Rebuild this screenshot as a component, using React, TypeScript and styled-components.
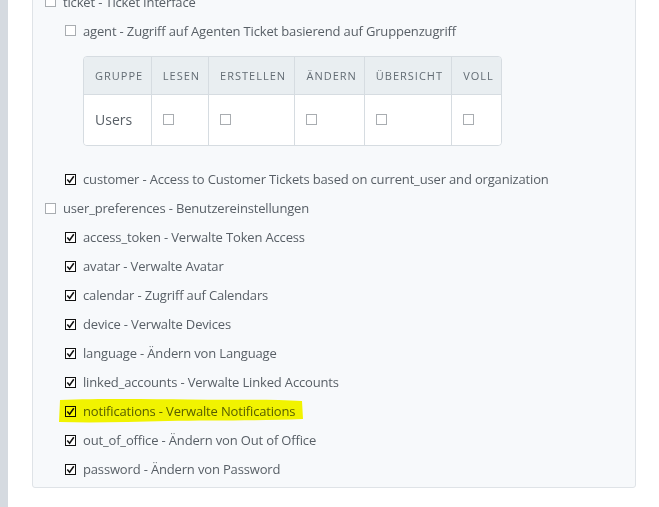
import styled, { createGlobalStyle } from 'styled-components';

const GlobalStyle = createGlobalStyle`
    body {
        margin: 0;
        background: #ffffff;
        font-family: 'Open Sans', 'Noto Sans', sans-serif;
        overflow: hidden;
    }
`;

const Page = styled.div`
    display: flex;
    height: 507px;
    overflow: hidden;
`;

const SideStrip = styled.div`
    width: 8px;
    flex-shrink: 0;
    background: #d5dae0;
`;

const Content = styled.div`
    padding-left: 24px;
`;

const Panel = styled.div`
    width: 604px;
    margin-top: -30px;
    padding: 16px 0 3px 12px;
    background: #f7f9fb;
    border: 1px solid #dfe3e7;
    border-radius: 3px;
    box-sizing: border-box;
`;

const Row = styled.div<{ $level: number }>`
    position: relative;
    display: flex;
    align-items: center;
    height: 29px;
    padding-left: ${(p) => p.$level * 20}px;
    font-size: 13px;
    letter-spacing: -0.16px;
    color: #585f66;
    white-space: nowrap;
`;

const Box = styled.span<{ $checked?: boolean }>`
    width: 11px;
    height: 11px;
    flex-shrink: 0;
    margin-right: 7px;
    box-sizing: border-box;
    border: 1px solid ${(p) => (p.$checked ? '#111' : '#a9adb1')};
    background: #ffffff;
    display: flex;
    align-items: center;
    justify-content: center;
`;

const Marker = styled.svg`
    position: absolute;
    left: 13px;
    top: 1px;
    width: 246px;
    height: 26px;
    mix-blend-mode: multiply;
    pointer-events: none;
`;

const TableWrap = styled.div`
    margin: 11px 0 19px 38px;
    width: 417px;
    border: 1px solid #d6dce1;
    border-radius: 4px;
    overflow: hidden;
`;

const Table = styled.table`
    border-collapse: collapse;
    width: 100%;
    table-layout: fixed;
`;

const Th = styled.th<{ $w: number }>`
    box-sizing: border-box;
    width: ${(p) => p.$w}px;
    height: 37px;
    padding: 0 0 0 11px;
    background: #e9eef1;
    text-align: left;
    font-weight: 400;
    font-size: 11px;
    letter-spacing: 1px;
    color: #636c74;
    white-space: nowrap;
    border-left: 1px solid #d6dce1;
    border-bottom: 1px solid #d6dce1;
    &:first-child {
        border-left: none;
    }
`;

const Td = styled.td`
    height: 50px;
    padding: 0 0 0 11px;
    background: #ffffff;
    font-size: 14px;
    color: #585f66;
    border-left: 1px solid #d6dce1;
    &:first-child {
        border-left: none;
    }
`;

const Check = () => (
    <svg width="9" height="9" viewBox="0 0 9 9">
        <path d="M1.3 4.6 L3.6 7.2 L7.8 1.2" fill="none" stroke="#111" strokeWidth="1.5" />
    </svg>
);

const columns: [string, number][] = [
    ['GRUPPE', 67],
    ['LESEN', 57],
    ['ERSTELLEN', 86],
    ['ÄNDERN', 69],
    ['ÜBERSICHT', 87],
    ['VOLL', 49],
];

const prefs = [
    'access_token - Verwalte Token Access',
    'avatar - Verwalte Avatar',
    'calendar - Zugriff auf Calendars',
    'device - Verwalte Devices',
    'language - Ändern von Language',
    'linked_accounts - Verwalte Linked Accounts',
    'notifications - Verwalte Notifications',
    'out_of_office - Ändern von Out of Office',
    'password - Ändern von Password',
];

const Item = ({ level, checked, text, marked }: { level: number; checked?: boolean; text: string; marked?: boolean }) => (
    <Row $level={level}>
        <Box $checked={checked}>{checked && <Check />}</Box>
        <span>{text}</span>
        {marked && (
            <Marker viewBox="0 0 246 26">
                <path
                    d="M2 2 C40 0.5 90 1 130 1.5 C170 2 210 1 244 3 L245 21 C200 23 150 22 110 23 C70 24 35 25 1 24 Z"
                    fill="#f9f900"
                />
            </Marker>
        )}
    </Row>
);

const App = () => {
    return (
        <Page>
            <GlobalStyle />
            <SideStrip />
            <Content>
                <Panel>
                    <Item level={0} text="ticket - Ticket Interface" />
                    <Item level={1} text="agent - Zugriff auf Agenten Ticket basierend auf Gruppenzugriff" />
                    <TableWrap>
                        <Table>
                            <thead>
                                <tr>
                                    {columns.map(([name, w]) => (
                                        <Th key={name} $w={w}>{name}</Th>
                                    ))}
                                </tr>
                            </thead>
                            <tbody>
                                <tr>
                                    <Td>Users</Td>
                                    {columns.slice(1).map(([name]) => (
                                        <Td key={name}>
                                            <Box />
                                        </Td>
                                    ))}
                                </tr>
                            </tbody>
                        </Table>
                    </TableWrap>
                    <Item level={1} checked text="customer - Access to Customer Tickets based on current_user and organization" />
                    <Item level={0} text="user_preferences - Benutzereinstellungen" />
                    {prefs.map((p) => (
                        <Item key={p} level={1} checked text={p} marked={p.startsWith('notifications')} />
                    ))}
                </Panel>
            </Content>
        </Page>
    );
};

export default App;
